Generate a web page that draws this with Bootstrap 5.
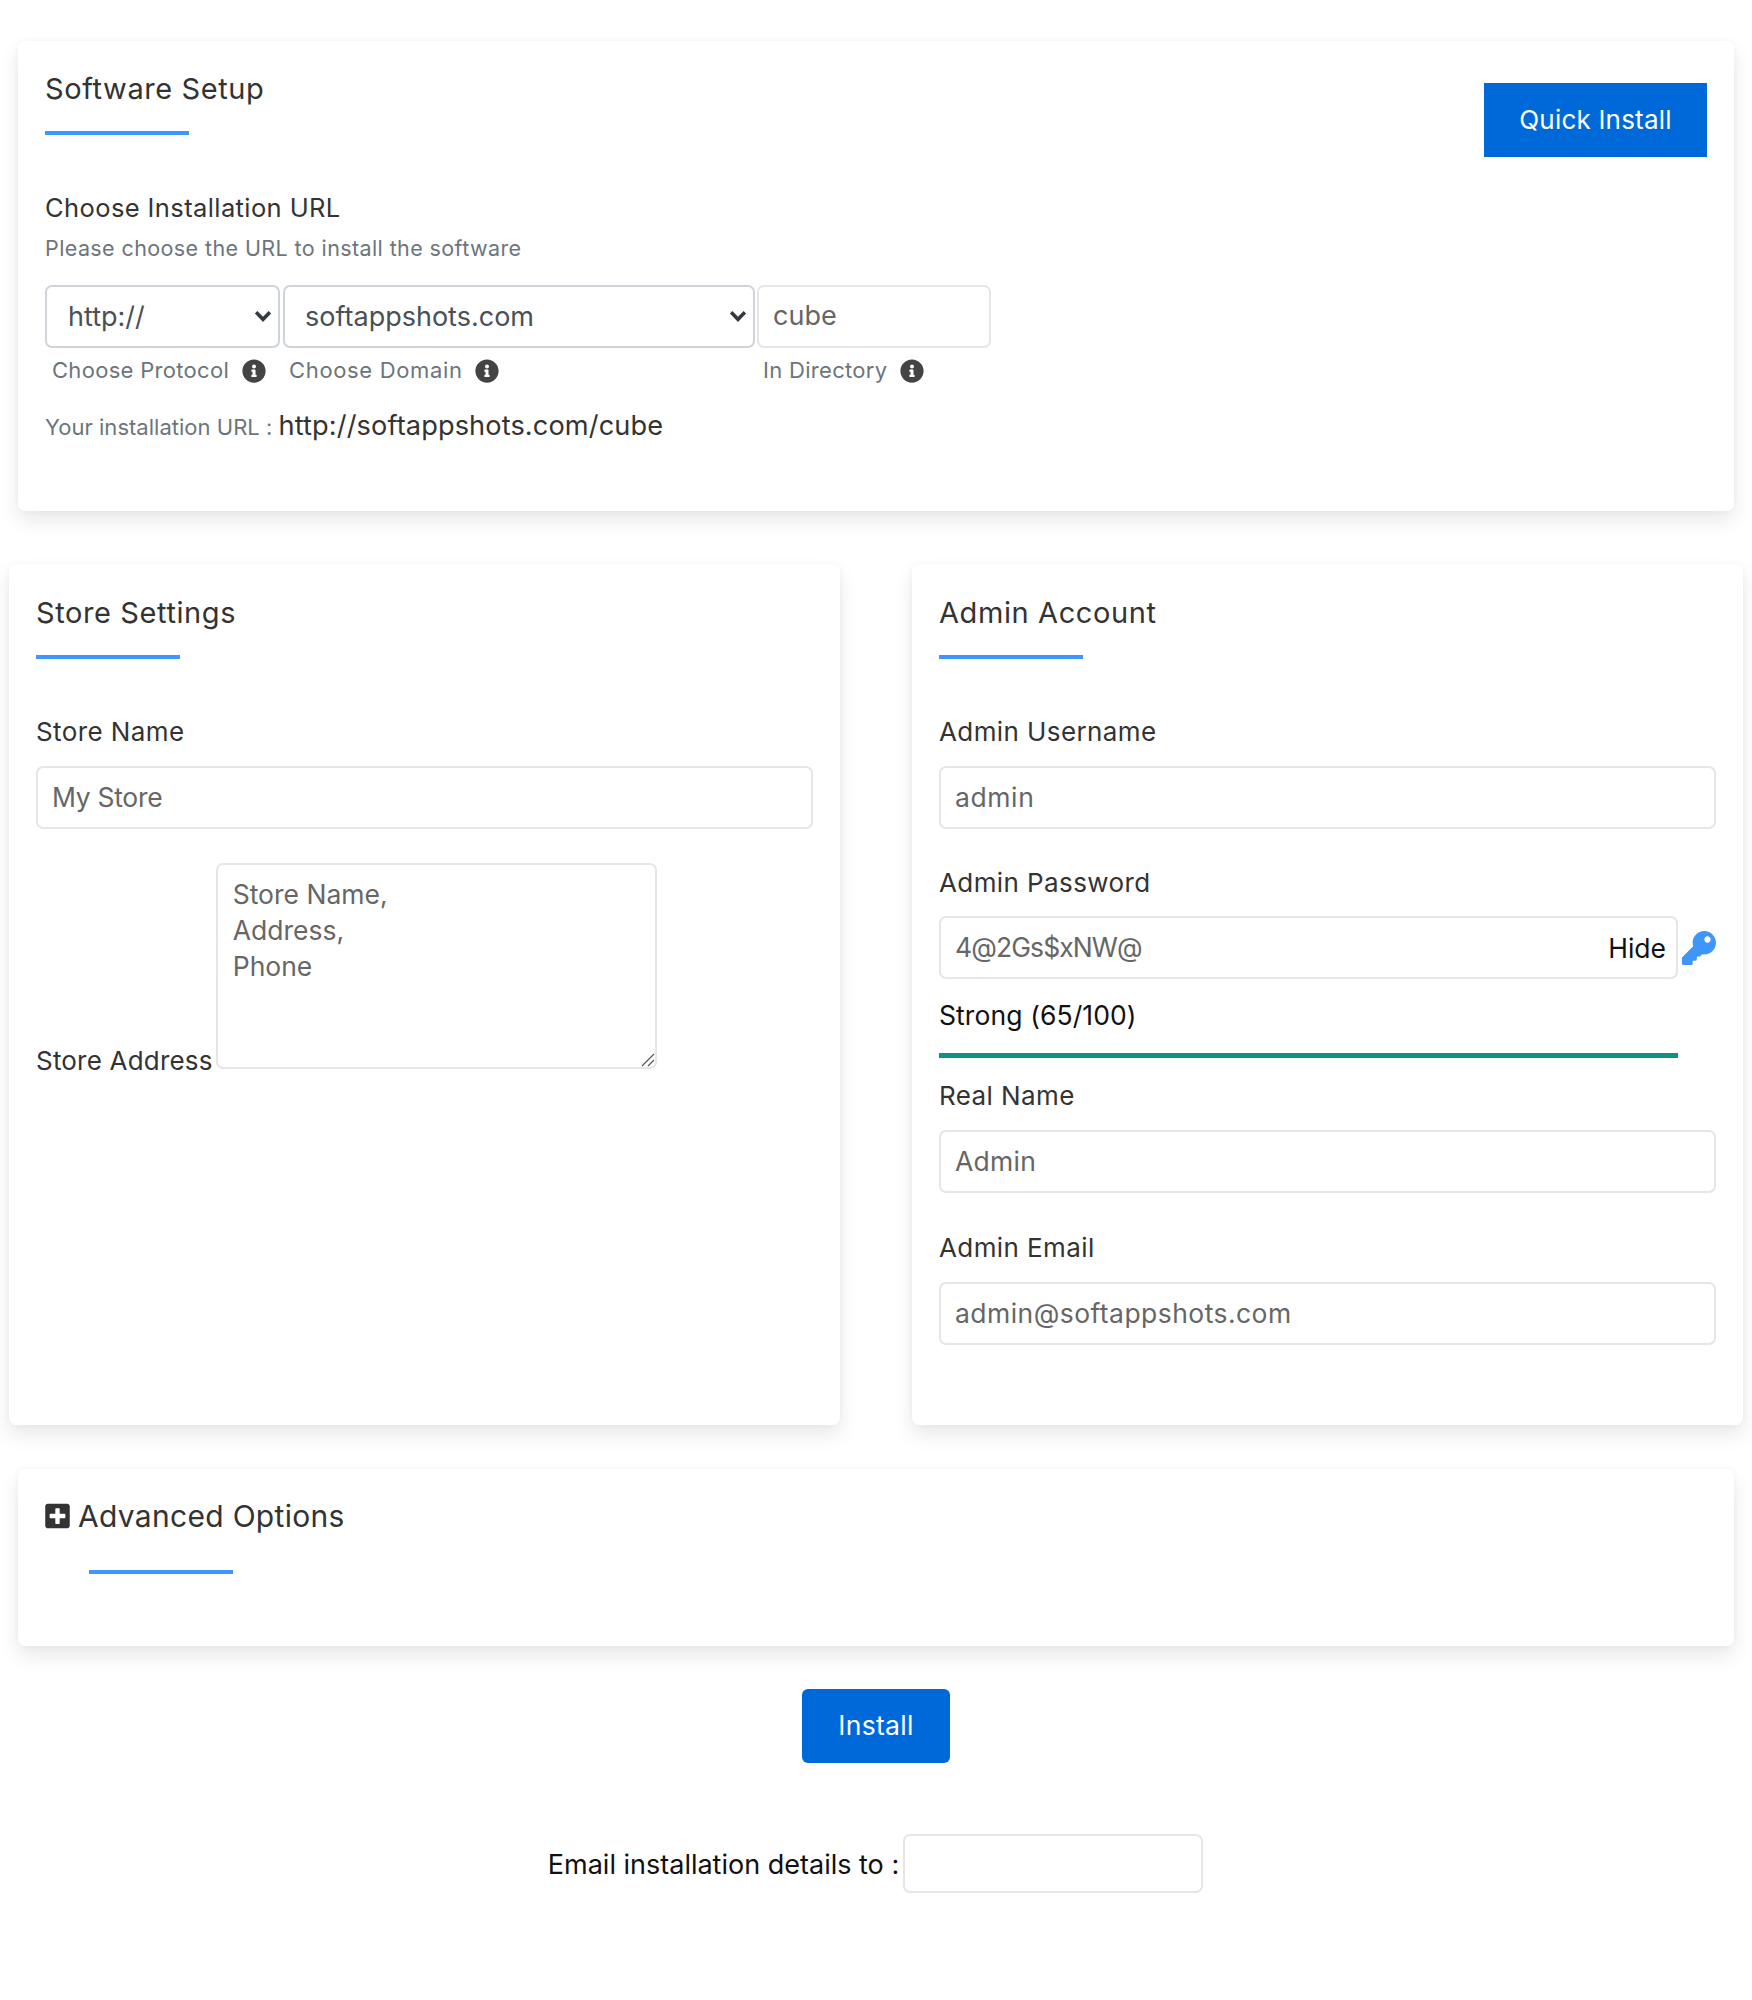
<!DOCTYPE html>
<html lang="en">
<head>
<meta charset="utf-8">
<title>Software Setup</title>
<link href="https://cdn.jsdelivr.net/npm/bootstrap@5.3.0/dist/css/bootstrap.min.css" rel="stylesheet">
<style>
body{font-family:"Inter","Liberation Sans",sans-serif;color:#333;background:#fff}
.sheet{padding:41px 9px 0 9px}
.pane{background:#fff;border-radius:7px;box-shadow:0 10px 20px rgba(0,0,0,.09),0 0 6px rgba(0,0,0,.04);padding:27px}
.pane-wide{margin:0 9px 0 9px}
.pane-top{height:470px;padding-top:27px}
.pane-title{font-size:29px;line-height:40px;font-weight:400;letter-spacing:.6px;color:#333;margin:0;padding-top:1px}
.pane-rule{width:144px;height:4px;background:#3e96fb;margin:22px 0 0}
.go-btn{background:#0069d9;border:0;border-radius:0;color:#fff;font-size:26px;letter-spacing:.2px;font-weight:400;width:223px;height:74px;padding:0 0 2px;margin-top:15px}
.go-btn:hover{background:#0069d9;color:#fff}
.sub-head{font-size:25.5px;letter-spacing:.4px;line-height:36px;color:#333;margin-top:33px}
.sub-note{font-size:21.5px;letter-spacing:.4px;line-height:30px;color:#6c757d;margin-top:7px}
.url-row{margin-top:22px;width:945px}
.sel-a,.sel-b,.dir-in{height:63px;border-radius:7px;font-size:27px;color:#495057;padding:2px 21px 0;flex:none}
.sel-a,.sel-b{border:2px solid #ced4da;background-position:right 4px center;background-size:22px 16.5px;background-image:url("data:image/svg+xml,%3csvg xmlns='http://www.w3.org/2000/svg' viewBox='0 0 16 12'%3e%3cpath fill='none' stroke='%23343a40' stroke-width='2.6' d='M3 3l5 5 5-5'/%3e%3c/svg%3e")}
.sel-a{width:235px}
.sel-b{width:472px;margin-left:3px;padding-left:20px}
.dir-in{width:234px;margin-left:2px;padding:0 14px 2px;border:2px solid #e6e6e6;color:#666}
.hint-row{font-size:22px;letter-spacing:.3px;line-height:30px;color:#6c757d;margin-top:7px}
.hint-a{width:237px;padding-left:7px}
.hint-b{width:474px;padding-left:7px;letter-spacing:.65px}
.hint-c{padding-left:7px}
.hint-row svg{width:24px;height:24px;fill:#444;margin-left:6px;vertical-align:-5px}
.url-line{margin-top:21px;font-size:22px;letter-spacing:.02px;line-height:40px;color:#6c757d}
.url-line b{font-weight:400;font-size:27.2px;letter-spacing:.1px;color:#333}
.duo{display:grid;grid-template-columns:831px 831px;column-gap:72px;margin-top:53px}
.pane-tall{height:861px;padding-top:28px}
.f-label{display:block;font-size:26px;letter-spacing:.4px;line-height:36px;color:#333;margin:0}
.f-in{height:63px;border:2px solid #e6e6e6;border-radius:7px;font-size:26.5px;color:#666;padding:0 14px 2px;margin-top:16px}
.f-in:focus{border-color:#e6e6e6;box-shadow:none;color:#666}
.gap-pw{margin-top:36px}
.gap-mail{margin-top:37px}
.first-label{margin-top:55px}
.ls-name{letter-spacing:-.3px}
.ls-user{letter-spacing:.6px}
.ls-pass{letter-spacing:-.9px}
.ls-mail{letter-spacing:.45px}
.ls-real{letter-spacing:.3px}
.addr{margin-top:34px}
.addr .f-label{margin-bottom:-10px;letter-spacing:.2px}
.addr textarea{width:441px;height:206px;border:2px solid #e6e6e6;border-radius:7px;font-size:26.5px;line-height:36px;color:#666;padding:11px 15px;margin-left:3px;outline:0}
.addr textarea::-webkit-resizer{background:url("data:image/svg+xml,%3csvg xmlns='http://www.w3.org/2000/svg' viewBox='0 0 15 15'%3e%3cpath fill='none' stroke='%23555' stroke-width='1.2' d='M2 14L14 2M8 14l6-6'/%3e%3c/svg%3e") no-repeat center/100%}
.pw-wrap{margin-top:15px}
.pw-box{width:739px;flex:none}
.pw-box .f-in{margin-top:0;padding-right:80px}
.pw-hide{right:12px;top:50%;transform:translateY(-50%);font-size:26.5px;color:#111;line-height:1}
.key-ico{width:34px;height:34px;fill:#3e96fb;margin-left:4px;flex:none}
.pw-state{font-size:26.5px;letter-spacing:.1px;line-height:36px;color:#111;margin-top:18px}
.pw-bar{width:739px;height:5px;background:#0a9484;margin-top:20px}
.after-bar{margin-top:20px}
.pane-adv{margin-top:44px;height:177px;padding-top:27px}
.adv-title{font-size:30px;letter-spacing:.3px;line-height:40px;padding-top:0}
.adv-title svg{width:25px;height:28px;fill:#333;margin-right:8px;vertical-align:-3px}
.adv-rule{margin:34px 0 0 44px}
.inst-wrap{margin-top:43px}
.inst-btn{background:#0069d9;border:0;border-radius:6px;color:#fff;font-size:26.5px;letter-spacing:.3px;width:148px;height:74px;padding:0}
.inst-btn:hover{background:#0069d9;color:#fff}
.mail-row{margin-top:71px;font-size:27px;color:#111;padding-right:1px}
.mail-row span{padding-top:3px}
.mail-row input{width:300px;height:59px;border:2px solid #e6e6e6;border-radius:7px;margin-left:4px;outline:0}
</style>
</head>
<body>
<div class="sheet">

  <section class="pane pane-wide pane-top">
    <div class="d-flex justify-content-between align-items-start">
      <div>
        <h2 class="pane-title">Software Setup</h2>
        <div class="pane-rule"></div>
      </div>
      <button class="btn go-btn" type="button">Quick Install</button>
    </div>
    <div class="sub-head">Choose Installation URL</div>
    <div class="sub-note">Please choose the URL to install the software</div>
    <div class="d-flex url-row">
      <select class="form-select sel-a"><option>http://</option></select>
      <select class="form-select sel-b"><option>softappshots.com</option></select>
      <input class="form-control dir-in" value="cube">
    </div>
    <div class="d-flex hint-row">
      <div class="hint-a">Choose Protocol <svg viewBox="0 0 512 512"><path d="M256 8C119.043 8 8 119.083 8 256c0 136.997 111.043 248 248 248s248-111.003 248-248C504 119.083 392.957 8 256 8zm0 110c23.196 0 42 18.804 42 42s-18.804 42-42 42-42-18.804-42-42 18.804-42 42-42zm56 254c0 6.627-5.373 12-12 12h-88c-6.627 0-12-5.373-12-12v-24c0-6.627 5.373-12 12-12h12v-64h-12c-6.627 0-12-5.373-12-12v-24c0-6.627 5.373-12 12-12h64c6.627 0 12 5.373 12 12v100h12c6.627 0 12 5.373 12 12v24z"/></svg></div>
      <div class="hint-b">Choose Domain <svg viewBox="0 0 512 512"><path d="M256 8C119.043 8 8 119.083 8 256c0 136.997 111.043 248 248 248s248-111.003 248-248C504 119.083 392.957 8 256 8zm0 110c23.196 0 42 18.804 42 42s-18.804 42-42 42-42-18.804-42-42 18.804-42 42-42zm56 254c0 6.627-5.373 12-12 12h-88c-6.627 0-12-5.373-12-12v-24c0-6.627 5.373-12 12-12h12v-64h-12c-6.627 0-12-5.373-12-12v-24c0-6.627 5.373-12 12-12h64c6.627 0 12 5.373 12 12v100h12c6.627 0 12 5.373 12 12v24z"/></svg></div>
      <div class="hint-c">In Directory <svg viewBox="0 0 512 512"><path d="M256 8C119.043 8 8 119.083 8 256c0 136.997 111.043 248 248 248s248-111.003 248-248C504 119.083 392.957 8 256 8zm0 110c23.196 0 42 18.804 42 42s-18.804 42-42 42-42-18.804-42-42 18.804-42 42-42zm56 254c0 6.627-5.373 12-12 12h-88c-6.627 0-12-5.373-12-12v-24c0-6.627 5.373-12 12-12h12v-64h-12c-6.627 0-12-5.373-12-12v-24c0-6.627 5.373-12 12-12h64c6.627 0 12 5.373 12 12v100h12c6.627 0 12 5.373 12 12v24z"/></svg></div>
    </div>
    <div class="url-line">Your installation URL : <b>http://softappshots.com/cube</b></div>
  </section>

  <div class="duo">
    <section class="pane pane-tall">
      <h2 class="pane-title">Store Settings</h2>
      <div class="pane-rule"></div>
      <label class="f-label first-label">Store Name</label>
      <input class="form-control f-in ls-name" value="My Store">
      <div class="d-flex align-items-end addr">
        <label class="f-label">Store Address</label>
        <textarea class="d-block">Store Name,
Address,
Phone</textarea>
      </div>
    </section>
    <section class="pane pane-tall">
      <h2 class="pane-title">Admin Account</h2>
      <div class="pane-rule"></div>
      <label class="f-label first-label">Admin Username</label>
      <input class="form-control f-in ls-user" value="admin">
      <label class="f-label gap-pw">Admin Password</label>
      <div class="d-flex align-items-center pw-wrap">
        <div class="position-relative pw-box">
          <input class="form-control f-in ls-pass" value="4@2Gs$xNW@">
          <span class="position-absolute pw-hide">Hide</span>
        </div>
        <svg class="key-ico" viewBox="0 0 512 512"><path d="M512 176.001C512 273.203 433.202 352 336 352c-11.22 0-22.19-1.062-32.827-3.069l-24.012 27.014A23.999 23.999 0 0 1 261.223 384H224v40c0 13.255-10.745 24-24 24h-40v40c0 13.255-10.745 24-24 24H24c-13.255 0-24-10.745-24-24v-78.059c0-6.365 2.529-12.47 7.029-16.971l161.802-161.802C163.108 213.814 160 195.271 160 176 160 78.798 238.797.001 335.999 0 433.488-.001 512 78.511 512 176.001zM336 128c0 26.51 21.49 48 48 48s48-21.49 48-48-21.49-48-48-48-48 21.49-48 48z"/></svg>
      </div>
      <div class="pw-state">Strong (65/100)</div>
      <div class="pw-bar"></div>
      <label class="f-label after-bar">Real Name</label>
      <input class="form-control f-in ls-real" value="Admin">
      <label class="f-label gap-mail">Admin Email</label>
      <input class="form-control f-in ls-mail" value="admin@softappshots.com">
    </section>
  </div>

  <section class="pane pane-wide pane-adv">
    <h2 class="pane-title adv-title"><svg viewBox="0 0 448 512"><path d="M400 32H48C21.5 32 0 53.5 0 80v352c0 26.5 21.5 48 48 48h352c26.5 0 48-21.5 48-48V80c0-26.5-21.5-48-48-48zm-32 252c0 6.6-5.4 12-12 12h-92v92c0 6.6-5.4 12-12 12h-56c-6.6 0-12-5.4-12-12v-92H92c-6.6 0-12-5.4-12-12v-56c0-6.6 5.4-12 12-12h92v-92c0-6.6 5.4-12 12-12h56c6.6 0 12 5.4 12 12v92h92c6.6 0 12 5.4 12 12v56z"/></svg>Advanced Options</h2>
    <div class="pane-rule adv-rule"></div>
  </section>

  <div class="text-center inst-wrap"><button class="btn inst-btn" type="button">Install</button></div>
  <div class="d-flex justify-content-center align-items-center mail-row">
    <span>Email installation details to :</span><input type="text" class="d-block">
  </div>
</div>
<script src="https://cdn.jsdelivr.net/npm/bootstrap@5.3.0/dist/js/bootstrap.bundle.min.js"></script>
</body>
</html>
